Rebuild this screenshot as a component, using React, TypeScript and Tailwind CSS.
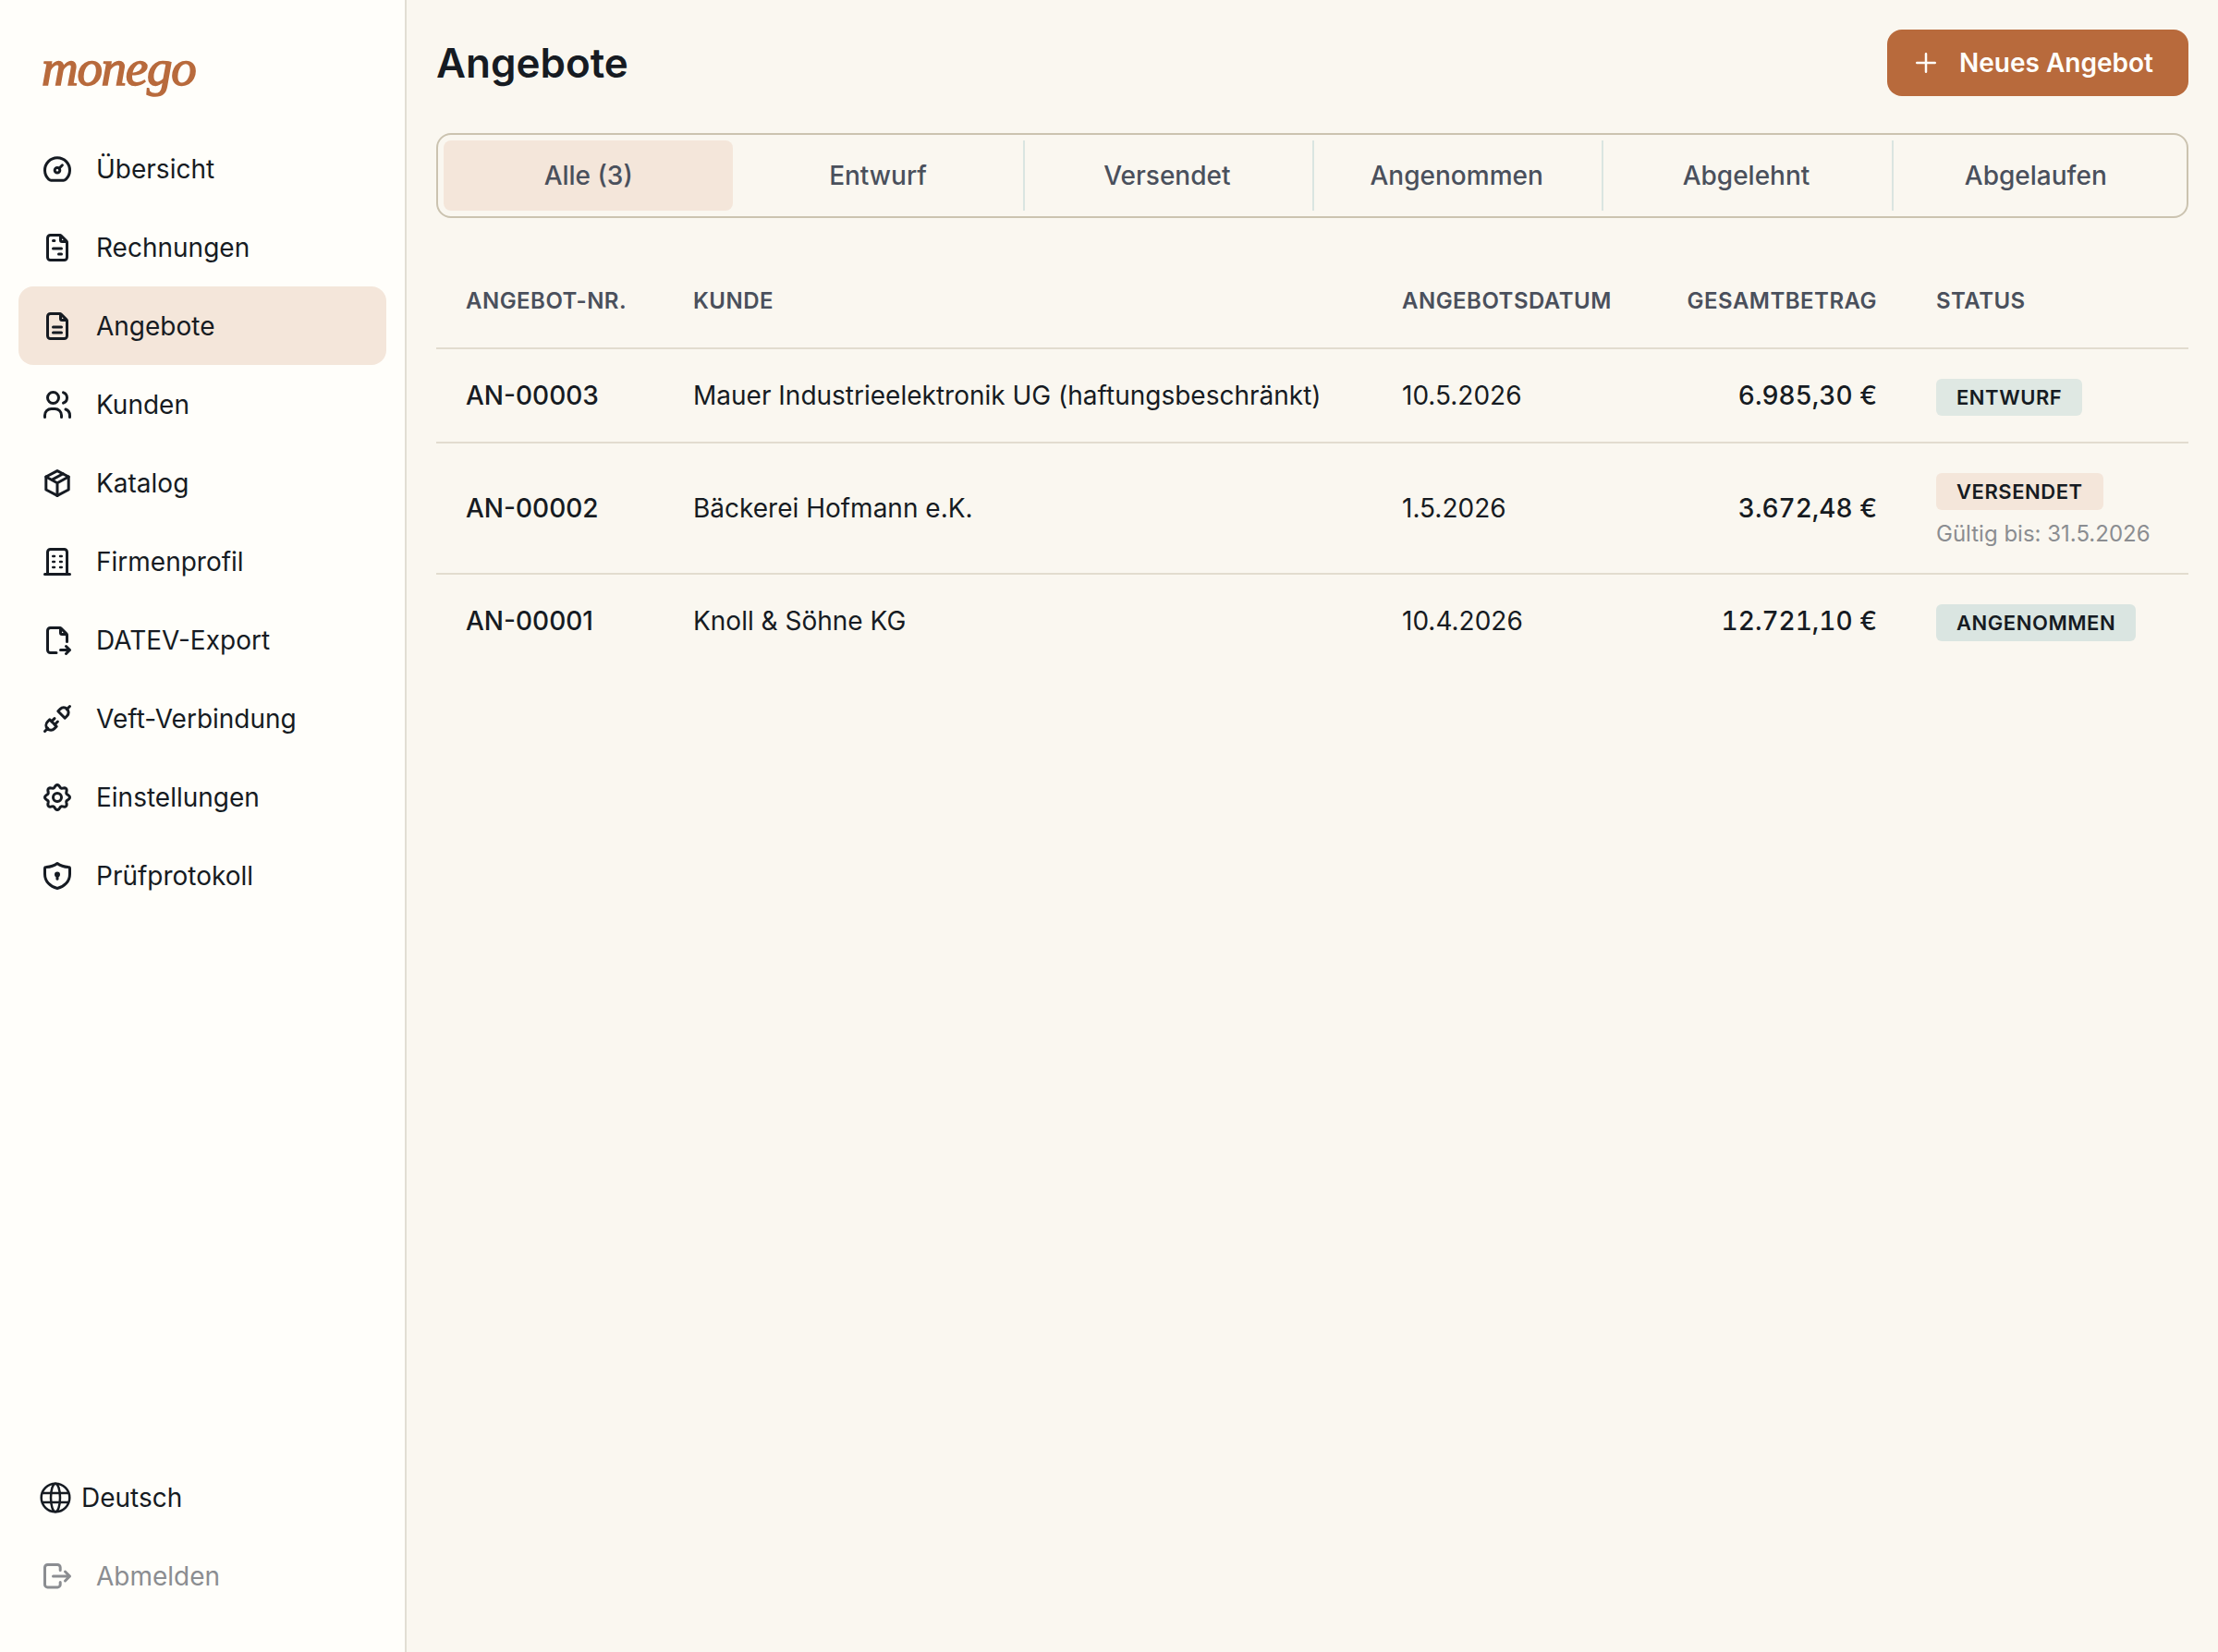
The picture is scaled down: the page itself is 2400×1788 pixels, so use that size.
import { useState } from 'react';
import type { ReactNode } from 'react';

// Wavy cog outline around the center of the 20x20 grid
const cogPath = () => {
  const points: string[] = [];
  for (let i = 0; i < 96; i++) {
    const angle = (i / 96) * Math.PI * 2;
    const r = 6.05 + 0.7 * Math.cos(angle * 8);
    points.push(`${(10 + r * Math.sin(angle)).toFixed(2)} ${(10 - r * Math.cos(angle)).toFixed(2)}`);
  }
  return `M${points.join('L')}Z`;
};

const fileFold = <path d="M11.75 3.5v2.5a.75.75 0 0 0 .75.75h2.5" />;
const fileOutline = (
  <path d="M6.25 3.25h4.88c.4 0 .78.16 1.06.44l2.62 2.62c.28.28.44.66.44 1.06v7.88a1.5 1.5 0 0 1-1.5 1.5h-7.5a1.5 1.5 0 0 1-1.5-1.5v-10.5a1.5 1.5 0 0 1 1.5-1.5z" />
);

const icons: Record<string, ReactNode> = {
  gauge: (
    <>
      <path d="M6.6 16.1h6.8c.45 0 .8-.15 1.1-.45a6.75 6.75 0 1 0-9 0c.3.3.65.45 1.1.45z" />
      <circle cx="10" cy="10.6" r="1.4" />
      <path d="M11.1 9.5l1.6-1.6" />
    </>
  ),
  invoice: (
    <>
      {fileOutline}
      {fileFold}
      <path d="M7.75 6.25h.7M7.75 10.5h4.5M10.75 13.5h1.5" />
    </>
  ),
  file: (
    <>
      {fileOutline}
      {fileFold}
      <path d="M7.75 10.5h4.5M7.75 13.5h4.5" />
    </>
  ),
  users: (
    <>
      <circle cx="7.75" cy="6.25" r="3" />
      <path d="M13.25 3.42a3 3 0 0 1 0 5.66" />
      <path d="M3.25 16.75v-1a3.5 3.5 0 0 1 3.5-3.5h2a3.5 3.5 0 0 1 3.5 3.5v1" />
      <path d="M14.5 12.5a3.5 3.5 0 0 1 2.25 3.25v1" />
    </>
  ),
  box: (
    <>
      <path d="M10 3.3l6.1 3.2v7L10 16.7l-6.1-3.2v-7z" />
      <path d="M3.9 6.5L10 9.9l6.1-3.4M10 9.9v6.8M7 8.2l6.1-3.3" />
    </>
  ),
  building: (
    <>
      <path d="M4.75 16.5V4.75a1.5 1.5 0 0 1 1.5-1.5h7.5a1.5 1.5 0 0 1 1.5 1.5V16.5M3.25 16.75h13.5" />
      <path d="M7.6 7h.9M11.5 7h.9M7.6 10h.9M11.5 10h.9M7.6 13h.9M11.5 13h.9" strokeWidth="1.2" />
    </>
  ),
  fileExport: (
    <>
      <path d="M9.5 16.75h-3.25a1.5 1.5 0 0 1-1.5-1.5v-10.5a1.5 1.5 0 0 1 1.5-1.5h4.88c.4 0 .78.16 1.06.44l2.62 2.62c.28.28.44.66.44 1.06v3.38" />
      {fileFold}
      <path d="M11.75 15.25h5M14.75 13.25l2 2-2 2" />
    </>
  ),
  plug: (
    <>
      <path d="M10.4 5.9l1.2-1.2a2.5 2.5 0 0 1 3.7 3.7l-1.2 1.2zM15.1 4.9l1.65-1.65" />
      <path d="M9.6 14.1l-1.2 1.2a2.5 2.5 0 0 1-3.7-3.7l1.2-1.2zM4.9 15.1l-1.65 1.65" />
      <path d="M6.9 11.4l1.6-1.6M8.6 13.1l1.6-1.6" />
    </>
  ),
  cog: (
    <>
      <path d={cogPath()} />
      <circle cx="10" cy="10" r="2.25" />
    </>
  ),
  shield: (
    <>
      <path d="M10 3.25c1.7 1.3 3.9 1.9 6 2 .4 0 .75.35.75.75v3c0 4-2.9 6.9-6.75 7.75-3.85-.85-6.75-3.75-6.75-7.75V6c0-.4.35-.75.75-.75 2.1-.1 4.3-.7 6-2z" />
      <circle cx="10" cy="9.2" r=".75" />
      <path d="M10 9.4v2.2" />
    </>
  ),
  logout: (
    <>
      <path d="M11.6 6.75v-1.5a1.5 1.5 0 0 0-1.5-1.5H4.75a1.5 1.5 0 0 0-1.5 1.5v9.2a1.5 1.5 0 0 0 1.5 1.5h5.35a1.5 1.5 0 0 0 1.5-1.5v-1.2" />
      <path d="M7.75 10h9M14.25 7.5l2.5 2.5-2.5 2.5" />
    </>
  ),
};

function Icon({ name }: { name: string }) {
  return (
    <svg
      viewBox="0 0 20 20"
      className="size-10 shrink-0"
      fill="none"
      stroke="currentColor"
      strokeWidth="1.5"
      strokeLinecap="round"
      strokeLinejoin="round"
    >
      {icons[name]}
    </svg>
  );
}

const navItems = [
  { label: 'Übersicht', icon: 'gauge' },
  { label: 'Rechnungen', icon: 'invoice' },
  { label: 'Angebote', icon: 'file' },
  { label: 'Kunden', icon: 'users' },
  { label: 'Katalog', icon: 'box' },
  { label: 'Firmenprofil', icon: 'building' },
  { label: 'DATEV-Export', icon: 'fileExport' },
  { label: 'Veft-Verbindung', icon: 'plug' },
  { label: 'Einstellungen', icon: 'cog' },
  { label: 'Prüfprotokoll', icon: 'shield' },
];

const tabs = ['Alle (3)', 'Entwurf', 'Versendet', 'Angenommen', 'Abgelehnt', 'Abgelaufen'];

const quotes = [
  {
    number: 'AN-00003',
    customer: 'Mauer Industrieelektronik UG (haftungsbeschränkt)',
    date: '10.5.2026',
    total: '6.985,30 €',
    status: 'ENTWURF',
    badge: 'bg-[#dfe8e3]',
    height: 'h-[102px]',
  },
  {
    number: 'AN-00002',
    customer: 'Bäckerei Hofmann e.K.',
    date: '1.5.2026',
    total: '3.672,48 €',
    status: 'VERSENDET',
    badge: 'bg-[#f4e6da]',
    validUntil: 'Gültig bis: 31.5.2026',
    height: 'h-[142px]',
  },
  {
    number: 'AN-00001',
    customer: 'Knoll & Söhne KG',
    date: '10.4.2026',
    total: '12.721,10 €',
    status: 'ANGENOMMEN',
    badge: 'bg-[#dae5e1]',
    height: 'h-[100px]',
  },
];

function Sidebar() {
  return (
    <aside className="flex w-[440px] shrink-0 flex-col border-r-2 border-[#e2ded3] bg-[#fffefa] px-5 pb-10">
      <div className="h-[140px] pt-10 pl-[25px] font-['Liberation_Serif',serif] text-[55px] leading-[68px] tracking-[-1.3px] text-[#b86a3c] italic [-webkit-text-stroke:1.5px_#b86a3c]">
        monego
      </div>
      <nav className="flex flex-col">
        {navItems.map((item) => (
          <a
            key={item.label}
            className={`flex h-[85px] items-center gap-[22px] rounded-2xl pl-[22px] ${
              item.label === 'Angebote' ? 'bg-[#f4e6da]' : ''
            }`}
          >
            <Icon name={item.icon} />
            {item.label}
          </a>
        ))}
      </nav>
      <div className="mt-auto flex flex-col">
        <div className="flex h-[85px] items-center gap-[11px] pl-[23px]">
          <svg viewBox="0 0 34 34" className="size-[34px]" fill="none" stroke="currentColor" strokeWidth="2.5">
            <circle cx="17" cy="17" r="15.3" />
            <ellipse cx="17" cy="17" rx="5" ry="15.3" />
            <path d="M2.5 12h29M2.5 22h29" />
          </svg>
          Deutsch
        </div>
        <div className="flex h-[85px] items-center gap-[22px] pl-[22px] text-[#8b8d91]">
          <Icon name="logout" />
          Abmelden
        </div>
      </div>
    </aside>
  );
}

export default function App() {
  const [activeTab, setActiveTab] = useState('Alle (3)');

  return (
    <div className="flex h-[1788px] w-[2400px] overflow-hidden bg-[#faf7f0] font-['Inter',sans-serif] text-[28px] leading-[42px] text-[#161b22]">
      <Sidebar />

      <main className="flex-1 px-8 pt-8">
        <header className="flex h-[72px] items-center justify-between">
          <h1 className="text-[44px] leading-[56px] font-semibold">Angebote</h1>
          <button className="flex h-[72px] w-[326px] items-center rounded-2xl bg-[#b86a3c] pl-[31px] font-semibold text-[#fffefa]">
            <svg
              viewBox="0 0 22 22"
              className="mr-[25px] size-[22px]"
              fill="none"
              stroke="currentColor"
              strokeWidth="2.5"
              strokeLinecap="round"
            >
              <path d="M11 1.25v19.5M1.25 11h19.5" />
            </svg>
            Neues Angebot
          </button>
        </header>

        {/* Status filter */}
        <div className="mt-10 grid h-[92px] grid-cols-6 rounded-2xl border-2 border-[#cbc3b0] p-1.5">
          {tabs.map((tab, idx) => (
            <button
              key={tab}
              onClick={() => setActiveTab(tab)}
              className={`font-medium text-[#4a505c] ${tab === activeTab ? 'rounded-lg bg-[#f4e6da]' : ''} ${
                idx > 1 ? 'border-l-2 border-[#dae5e1] pr-[3px]' : ''
              }`}
            >
              {tab}
            </button>
          ))}
        </div>

        <table className="mt-[38px] w-full table-fixed border-separate border-spacing-0 text-left">
          <colgroup>
            <col className="w-[246px]" />
            <col className="w-[767px]" />
            <col className="w-[291px]" />
            <col className="w-[287px]" />
            <col className="w-[305px]" />
          </colgroup>
          <thead>
            <tr className="h-[104px] text-2xl tracking-[0.02em] text-[#4a505c] *:border-b-2 *:border-[#e2dccf] *:px-8 *:pt-0.5 *:pb-0 *:font-semibold">
              <th>ANGEBOT-NR.</th>
              <th>KUNDE</th>
              <th>ANGEBOTSDATUM</th>
              <th className="text-right">GESAMTBETRAG</th>
              <th>STATUS</th>
            </tr>
          </thead>
          <tbody>
            {quotes.map((quote) => (
              <tr
                key={quote.number}
                className={`${quote.height} *:border-[#e2dccf] *:px-8 not-last:*:border-b-2`}
              >
                <td className="font-medium">{quote.number}</td>
                <td>{quote.customer}</td>
                <td>{quote.date}</td>
                <td className="text-right font-medium tabular-nums">{quote.total}</td>
                <td className="pt-8 align-top">
                  <span
                    className={`flex h-10 w-fit items-center rounded-md px-[22px] text-[22px] font-semibold tracking-[0.025em] ${quote.badge}`}
                  >
                    {quote.status}
                  </span>
                  {quote.validUntil && (
                    <div className="mt-2 text-2xl leading-9 whitespace-nowrap text-[#8b8d91]">{quote.validUntil}</div>
                  )}
                </td>
              </tr>
            ))}
          </tbody>
        </table>
      </main>
    </div>
  );
}
